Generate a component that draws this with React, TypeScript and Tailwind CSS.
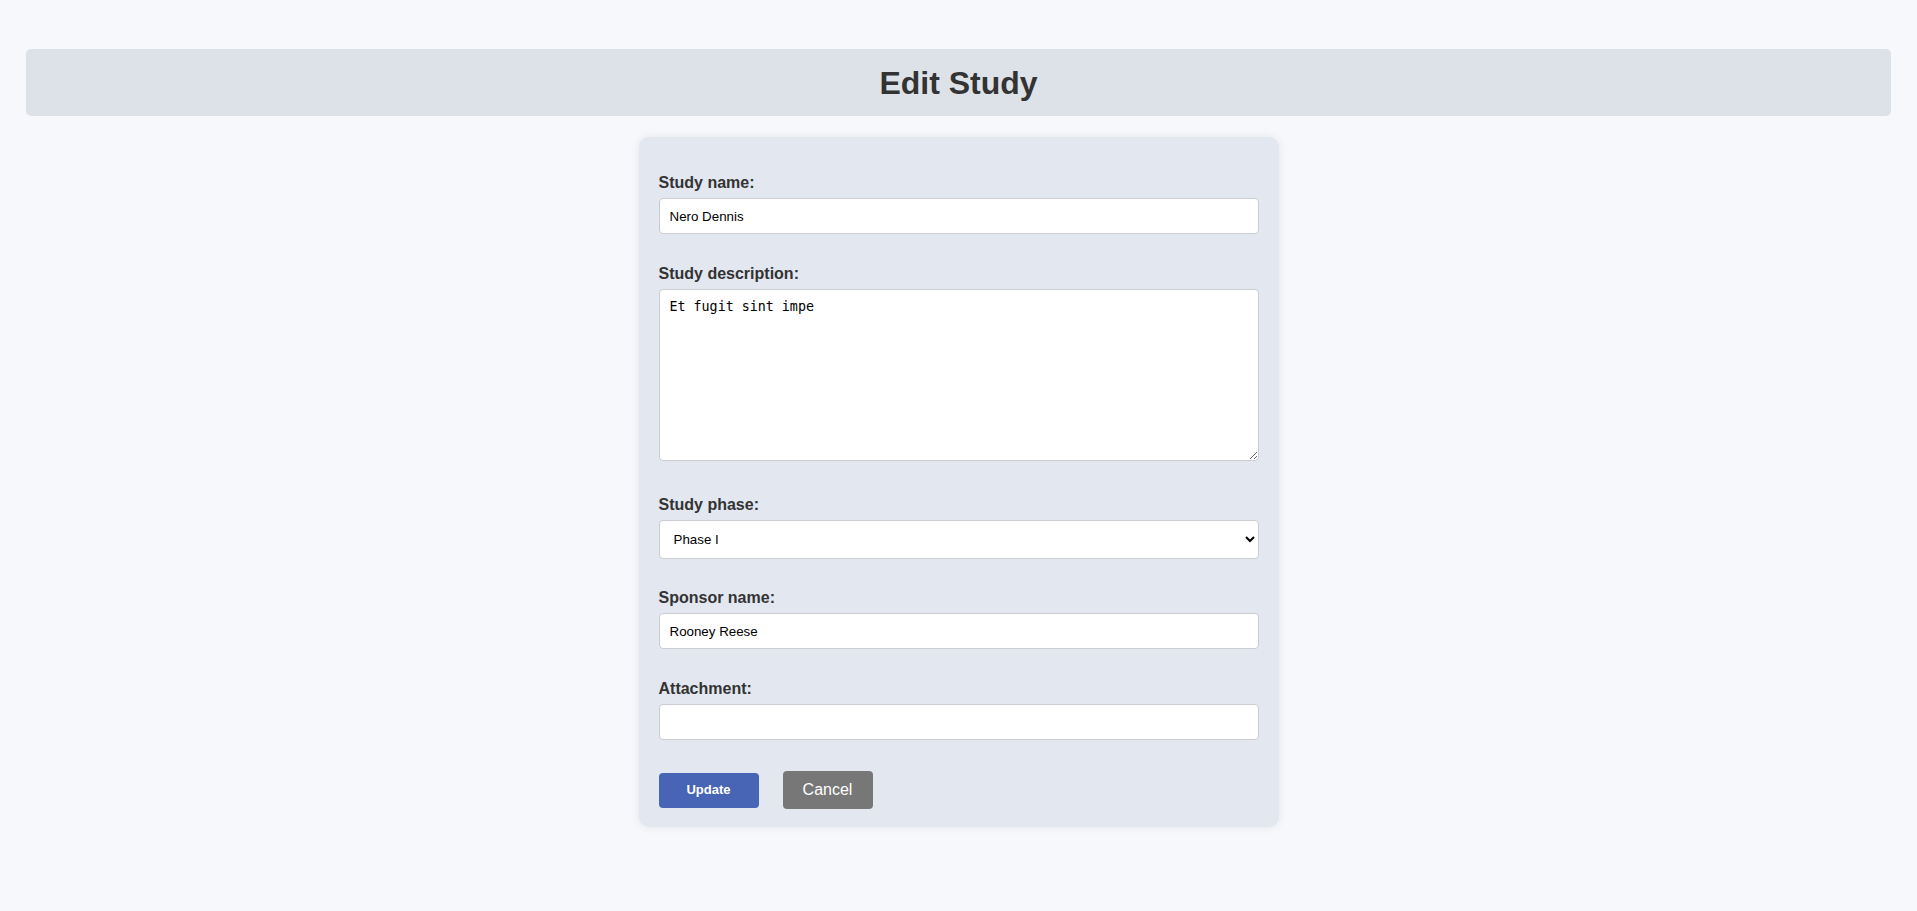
import React from "react";

const fieldBase =
  "block w-full rounded-[4px] border border-[#cbcdd3] bg-white text-[13.33px] text-black outline-none";

function Label({ children }: { children: React.ReactNode }) {
  return <label className="block text-[16px] font-bold leading-[18px] text-[#333] mb-[6px]">{children}</label>;
}

export default function App() {
  return (
    <div className="min-h-screen bg-[#f6f8fb] pt-[49px] pb-[80px] font-['Liberation_Sans',Arial,sans-serif]">
      <header className="mx-[26px] flex h-[67px] items-center justify-center rounded-[5px] bg-[#dde2e9]">
        <h1 className="text-[32px] font-bold text-[#333]">Edit Study</h1>
      </header>

      <form
        className="mx-auto mt-[21px] w-[640px] rounded-[10px] bg-[#e2e7f0] px-[20px] pt-[37px] pb-[18px] shadow-[0_0_10px_rgba(0,0,0,0.08)]"
        onSubmit={(e) => e.preventDefault()}
      >
        <div className="mb-[31px]">
          <Label>Study name:</Label>
          <input type="text" defaultValue="Nero Dennis" className={`${fieldBase} h-[36px] px-[10px]`} />
        </div>

        <div className="mb-[35px]">
          <Label>Study description:</Label>
          <textarea
            defaultValue="Et fugit sint impe"
            className={`${fieldBase} h-[172px] px-[10px] pt-[9px] font-['DejaVu_Sans_Mono',monospace] text-[12px] leading-[15px]`}
          />
        </div>

        <div className="mb-[30px]">
          <Label>Study phase:</Label>
          <select defaultValue="Phase I" className={`${fieldBase} h-[39px] px-[10px]`}>
            <option>Phase I</option>
            <option>Phase II</option>
            <option>Phase III</option>
            <option>Phase IV</option>
          </select>
        </div>

        <div className="mb-[31px]">
          <Label>Sponsor name:</Label>
          <input type="text" defaultValue="Rooney Reese" className={`${fieldBase} h-[36px] px-[10px]`} />
        </div>

        <div className="mb-[31px]">
          <Label>Attachment:</Label>
          <input type="text" className={`${fieldBase} h-[36px] px-[10px]`} />
        </div>

        <div className="flex items-center gap-[24px]">
          <button type="submit" className="h-[35px] w-[100px] rounded-[4px] bg-[#4864b4] text-[13px] font-bold text-white">
            Update
          </button>
          <button type="button" className="h-[38px] w-[90px] rounded-[4px] bg-[#777777] text-[16px] text-white">
            Cancel
          </button>
        </div>
      </form>
    </div>
  );
}
